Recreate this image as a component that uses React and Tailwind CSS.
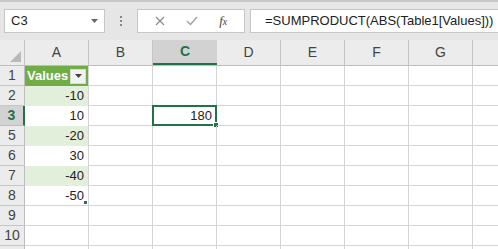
import { useState } from "react";

const cols = ["A", "B", "C", "D", "E", "F", "G", "H"];
const rows = [
  { n: "1", a: "Values", kind: "head" },
  { n: "2", a: "-10", kind: "band" },
  { n: "3", a: "10", kind: "plain", c: "180" },
  { n: "5", a: "-20", kind: "band" },
  { n: "6", a: "30", kind: "plain" },
  { n: "7", a: "-40", kind: "band" },
  { n: "8", a: "-50", kind: "plain", last: true },
  { n: "9" },
  { n: "10" },
  { n: "" },
];

function ValueCell({ row }) {
  if (row.kind === "head") {
    return (
      <div className="h-full bg-[#70ad47] flex items-center justify-between pl-[2px] pr-[2px] border-r border-[#d4d4d4]">
        <span className="text-white font-bold text-[13px]">{row.a}</span>
        <span className="w-[16px] h-[15px] bg-[#f2f2f2] border border-[#d9d9d9] flex items-center justify-center">
          <svg width="7" height="4" viewBox="0 0 7 4"><path d="M0 0h7L3.5 4z" fill="#444" /></svg>
        </span>
      </div>
    );
  }
  if (!row.kind) return <div className="h-full border-r border-b border-[#d4d4d4]" />;
  return (
    <div
      className={`h-full relative flex items-center justify-end pr-[4px] text-[13px] text-[#222] border-r border-[#d4d4d4] ${
        row.kind === "band" ? "bg-[#e2efda]" : "bg-white"
      } ${row.last ? "border-b" : ""}`}
    >
      {row.a}
      {row.last && <span className="absolute right-[1px] bottom-[1px] w-[3px] h-[3px] bg-[#4a5a70]" />}
    </div>
  );
}

export default function App() {
  const [sel] = useState("C3");
  return (
    <div className="w-[498px] h-[249px] overflow-hidden bg-white" style={{ fontFamily: "'Liberation Sans', Arial, sans-serif" }}>
      {/* formula bar */}
      <div className="h-[40px] bg-[#e6e6e6] border-t-2 border-[#c8c8c8] flex items-center pl-[4px]">
        <div className="w-[101px] shrink-0 h-[24px] bg-white border border-[#c6c6c6] flex items-center justify-between pl-[6px] pr-[6px]">
          <span className="text-[13px] text-[#222]">{sel}</span>
          <svg width="7" height="4" viewBox="0 0 7 4"><path d="M0 0h7L3.5 4z" fill="#666" /></svg>
        </div>
        <div className="w-[32px] shrink-0 flex flex-col items-center gap-[2px]">
          <span className="w-[2px] h-[2px] bg-[#888]" />
          <span className="w-[2px] h-[2px] bg-[#888]" />
          <span className="w-[2px] h-[2px] bg-[#888]" />
        </div>
        <div className="w-[108px] shrink-0 h-[24px] bg-white border border-[#c6c6c6] flex items-center justify-around px-[6px]">
          <svg width="10" height="10" viewBox="0 0 10 10"><path d="M1 1l8 8M9 1l-8 8" stroke="#8a8a8a" strokeWidth="1.2" /></svg>
          <svg width="12" height="10" viewBox="0 0 12 10"><path d="M1 5l3.5 3.5L11 1" stroke="#a0a0a0" strokeWidth="1.4" fill="none" /></svg>
          <span className="text-[13px] italic text-[#444]" style={{ fontFamily: "'Liberation Serif', serif" }}>
            f<span className="text-[10px]">x</span>
          </span>
        </div>
        <div className="ml-[5px] flex-1 min-w-0 overflow-hidden h-[24px] bg-white border border-[#c6c6c6] border-r-0 flex items-center pl-[14px]">
          <span className="text-[13px] text-[#222] whitespace-nowrap">=SUMPRODUCT(ABS(Table1[Values]))</span>
        </div>
      </div>

      {/* column headers */}
      <div className="flex h-[26px] bg-[#ececec] border-b border-[#bdbdbd]">
        <div className="w-[25px] shrink-0 relative border-r border-[#c6c6c6]">
          <svg className="absolute right-[3px] bottom-[3px]" width="11" height="11" viewBox="0 0 11 11"><path d="M11 0v11H0z" fill="#b9b9b9" /></svg>
        </div>
        {cols.map((c) => (
          <div
            key={c}
            className={`w-[64px] shrink-0 flex items-center justify-center text-[14px] ${
              c === "C"
                ? "bg-[#d2d2d2] text-[#217346] font-bold border-b-2 border-[#217346]"
                : "text-[#444] border-r border-[#c6c6c6]"
            }`}
          >
            {c === "H" ? "" : c}
          </div>
        ))}
      </div>

      {/* rows */}
      {rows.map((r, i) => (
        <div key={i} className="flex h-[20px]">
          <div
            className={`w-[25px] shrink-0 flex items-center justify-center text-[14px] border-b ${
              r.n === "3"
                ? "bg-[#d2d2d2] text-[#217346] font-bold border-r-2 border-r-[#217346] border-b-[#bdbdbd]"
                : "bg-[#ececec] text-[#444] border-r border-[#bdbdbd] border-b-[#c6c6c6]"
            }`}
          >
            {r.n}
          </div>
          <div className="w-[64px] shrink-0">
            <ValueCell row={r} />
          </div>
          {cols.slice(1).map((c) => (
            <div key={c} className="w-[64px] shrink-0 relative border-r border-b border-[#d4d4d4]">
              {c === "C" && r.c && (
                <div className="absolute -left-[1px] -top-[1px] w-[65px] h-[21px] border-2 border-[#217346] flex items-center justify-end pr-[3px] text-[13px] text-[#222]">
                  {r.c}
                  <span className="absolute -right-[4px] -bottom-[4px] w-[6px] h-[6px] bg-[#217346] border border-white" />
                </div>
              )}
            </div>
          ))}
        </div>
      ))}
    </div>
  );
}
